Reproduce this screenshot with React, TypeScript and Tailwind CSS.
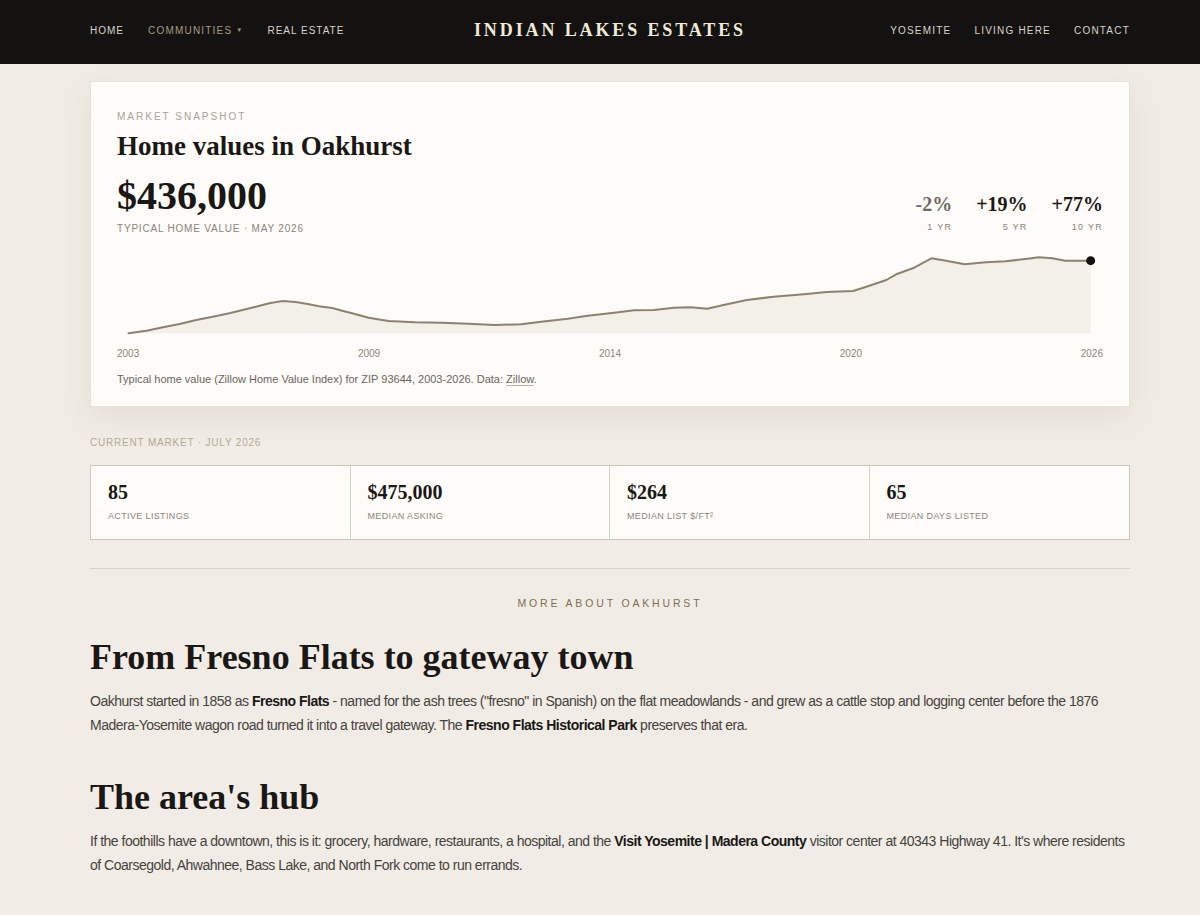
import React from 'react';

// chart points read off the reference (zoom coords), mapped to svg space
const raw: [number, number][] = [
  [58, 280], [85, 272], [110, 262], [135, 252], [160, 240], [185, 230], [210, 220], [230, 210],
  [250, 200], [270, 190], [290, 183], [310, 186], [330, 193], [345, 199], [365, 204], [380, 212],
  [395, 220], [420, 233], [450, 243], [490, 247], [530, 248], [570, 251], [610, 255], [650, 253],
  [680, 245], [720, 236], [750, 227], [790, 218], [820, 211], [850, 210], [880, 203], [905, 202],
  [930, 206], [960, 193], [990, 180], [1030, 170], [1080, 162], [1110, 156], [1150, 153], [1170, 140],
  [1200, 120], [1215, 103], [1240, 85], [1268, 55], [1290, 62], [1318, 73], [1350, 67], [1380, 64],
  [1410, 57], [1430, 52], [1450, 55], [1470, 62], [1508, 62],
];

const pts = raw.map(([zx, zy]) => [90 + zx / 1.507 - 117, 240 + zy / 3 - 246]);
const BASE = 87.3;
const line = pts.map(([x, y]) => `${x.toFixed(1)},${y.toFixed(1)}`).join(' ');
const area = `${pts[0][0].toFixed(1)},${BASE} ${line} ${pts[pts.length - 1][0].toFixed(1)},${BASE}`;
const last = pts[pts.length - 1];

const navLeft = ['Home', 'Communities', 'Real Estate'];
const navRight = ['Yosemite', 'Living Here', 'Contact'];

const changes = [
  { value: '-2%', label: '1 yr', muted: true },
  { value: '+19%', label: '5 yr', muted: false },
  { value: '+77%', label: '10 yr', muted: false },
];

const stats = [
  { value: '85', label: 'Active listings' },
  { value: '$475,000', label: 'Median asking' },
  { value: '$264', label: 'Median list $/ft²' },
  { value: '65', label: 'Median days listed' },
];

const PriceChart: React.FC = () => (
  <svg width="985" height="92" viewBox="0 0 985 92" className="mt-[10px] block">
    <polygon points={area} fill="#f3f0e9" />
    <polyline points={line} fill="none" stroke="#8b8270" strokeWidth="2" strokeLinejoin="round" strokeLinecap="round" />
    <circle cx={last[0]} cy={last[1]} r="4.5" fill="#151210" />
  </svg>
);

const App: React.FC = () => {
  return (
    <div className="min-h-[915px] bg-[#f1ede6] font-['Liberation_Sans',Arial,sans-serif] text-[#1a1714]">
      {/* Header */}
      <header className="h-16 bg-[#141210]">
        <div className="ml-[90px] w-[1040px] h-full pb-[4px] flex items-center justify-between">
          <nav className="flex items-center gap-[24px] w-[300px]">
            {navLeft.map((item) => (
              <span
                key={item}
                className={`text-[10px] uppercase ${
                  item === 'Communities' ? 'tracking-[0.12em] text-[#a89c84]' : 'tracking-[0.1em] text-[#d8d4cc]'
                }`}
              >
                {item}
                {item === 'Communities' && <span className="ml-[4px] text-[6px] align-middle">▼</span>}
              </span>
            ))}
          </nav>
          <div className="font-['Liberation_Serif',serif] font-bold text-[18px] tracking-[0.16em] text-[#f0ead8]">
            INDIAN LAKES ESTATES
          </div>
          <nav className="flex items-center justify-end gap-[23px] w-[300px]">
            {navRight.map((item) => (
              <span key={item} className="text-[10px] uppercase tracking-[0.12em] text-[#d8d4cc]">
                {item}
              </span>
            ))}
          </nav>
        </div>
      </header>

      <main className="ml-[90px] w-[1040px] pb-10">
        {/* Market snapshot card */}
        <section className="mt-[17px] border border-[#e5e1d8] bg-[#fdfcf8] px-[26px] pt-[28px] pb-[19px] shadow-[0_10px_28px_rgba(60,45,20,0.08)]">
          <div className="text-[10px] leading-[14px] uppercase tracking-[0.2em] text-[#a8a29a]">Market Snapshot</div>
          <h1 className="mt-[6px] font-['Liberation_Serif',serif] font-bold text-[27px] leading-[32px]">
            Home values in Oakhurst
          </h1>
          <div className="mt-[12px] flex items-end justify-between">
            <div>
              <div className="font-['Liberation_Serif',serif] font-bold text-[40px] leading-[44px]">$436,000</div>
              <div className="mt-[4px] text-[10px] leading-[14px] uppercase tracking-[0.08em] text-[#8a847a]">
                Typical home value · May 2026
              </div>
            </div>
            <div className="flex gap-[24px] pb-[2px]">
              {changes.map((c) => (
                <div key={c.label} className="text-right">
                  <div
                    className={`font-['Liberation_Serif',serif] font-bold text-[20px] leading-[24px] ${
                      c.muted ? 'text-[#6f6a63]' : 'text-[#1a1714]'
                    }`}
                  >
                    {c.value}
                  </div>
                  <div className="mt-[4px] text-[9px] leading-[14px] uppercase tracking-[0.14em] text-[#8a847a]">
                    {c.label}
                  </div>
                </div>
              ))}
            </div>
          </div>

          <PriceChart />

          <div className="mt-[9px] flex justify-between text-[10px] leading-[14px] text-[#8c867c]">
            <span>2003</span>
            <span>2009</span>
            <span>2014</span>
            <span>2020</span>
            <span>2026</span>
          </div>
          <p className="mt-[10px] text-[11px] leading-[16px] text-[#6b6660]">
            Typical home value (Zillow Home Value Index) for ZIP 93644, 2003-2026. Data:{' '}
            <span className="underline decoration-[#b8b2a6] underline-offset-2">Zillow</span>.
          </p>
        </section>

        {/* Current market */}
        <div className="mt-[29px] text-[10px] leading-[14px] uppercase tracking-[0.08em] text-[#b3a994]">
          Current Market · July 2026
        </div>
        <div className="mt-[15px] grid grid-cols-4 border border-[#cdc8bc] bg-[#fdfcf8] divide-x divide-[#d6d1c6]">
          {stats.map((s) => (
            <div key={s.label} className="px-[17px] pt-[14px] pb-[17px]">
              <div className="font-['Liberation_Serif',serif] font-bold text-[20px] leading-[24px]">{s.value}</div>
              <div className="mt-[6px] text-[9px] leading-[12px] uppercase tracking-[0.04em] text-[#8c867c]">
                {s.label}
              </div>
            </div>
          ))}
        </div>

        <hr className="mt-[28px] border-t border-[#d8d3c8]" />

        <div className="mt-[26px] text-center text-[10.5px] leading-[16px] uppercase tracking-[0.27em] text-[#7f6f50]">
          More about Oakhurst
        </div>

        <h2 className="mt-[24px] font-['Liberation_Serif',serif] font-bold text-[36px] leading-[44px]">
          From Fresno Flats to gateway town
        </h2>
        <p className="mt-[10px] text-[14px] leading-[24px] tracking-[-0.5px] text-[#46423c]">
          Oakhurst started in 1858 as <strong className="font-bold text-[#1a1714]">Fresno Flats</strong> - named for the
          ash trees ("fresno" in Spanish) on the flat meadowlands - and grew as a cattle stop and logging center before
          the 1876 Madera-Yosemite wagon road turned it into a travel gateway. The{' '}
          <strong className="font-bold text-[#1a1714]">Fresno Flats Historical Park</strong> preserves that era.
        </p>

        <h2 className="mt-[38px] font-['Liberation_Serif',serif] font-bold text-[36px] leading-[44px]">
          The area's hub
        </h2>
        <p className="mt-[10px] text-[14px] leading-[24px] tracking-[-0.5px] text-[#46423c]">
          If the foothills have a downtown, this is it: grocery, hardware, restaurants, a hospital, and the{' '}
          <strong className="font-bold text-[#1a1714]">Visit Yosemite | Madera County</strong> visitor center at 40343
          Highway 41. It's where residents of Coarsegold, Ahwahnee, Bass Lake, and North Fork come to run errands.
        </p>
      </main>
    </div>
  );
};

export default App;
